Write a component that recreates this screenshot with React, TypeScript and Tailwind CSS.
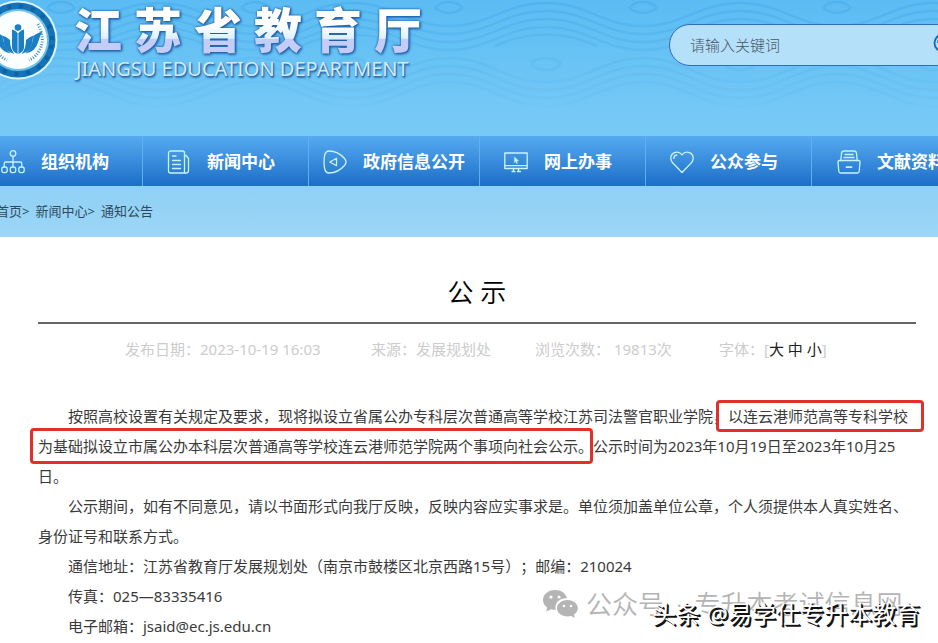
import React from "react";

type IconProps = { className?: string };

const iconProps = {
  viewBox: "0 0 24 24",
  fill: "none",
  stroke: "currentColor",
  strokeWidth: 1.3,
  strokeLinecap: "round" as const,
  strokeLinejoin: "round" as const,
  "aria-hidden": true,
};

const OrgIcon = ({ className }: IconProps) => (
  <svg {...iconProps} className={className}>
    <circle cx="12" cy="3.5" r="2.8" />
    <path d="M12 6.4v10.4M3.2 16.8v-3.3q0-1.5 1.5-1.5h14.6q1.5 0 1.5 1.5v3.3" />
    <rect x="0.8" y="17" width="5.4" height="5.6" rx="2" />
    <rect x="9.3" y="17" width="5.4" height="5.6" rx="2" />
    <rect x="17.8" y="17" width="5.4" height="5.6" rx="2" />
  </svg>
);

const NewsIcon = ({ className }: IconProps) => (
  <svg {...iconProps} className={className}>
    <path d="M4 1h11.5q2 0 2 2v20H3.5q-2 0-2-2V3.500Q1.500 1 4 1z" />
    <path d="M17.500 5.500h1.500l2.500 3v12q0 2.500-2.500 2.500h-1.500M5.500 6h3.500M5.500 10.500h8M5.500 14.500h8M5.500 18.500h8" />
  </svg>
);

const InfoIcon = ({ className }: IconProps) => (
  <svg {...iconProps} className={className}>
    <path d="M6 1Q15 1 21.500 8.500q3 3.500 0 7Q15 23 6 23 2.500 23 1.500 18 .6 12 1.500 6 2.500 1 6 1z" />
    <path d="M13.500 8.300v7.400L6.800 12z" />
  </svg>
);

const OnlineIcon = ({ className }: IconProps) => (
  <svg {...iconProps} className={className}>
    <rect x="0.8" y="3" width="22.400" height="15.500" />
    <path d="M1 15.600h22M9.500 18.500v2.500M14.500 18.500v2.500M8 21.500h3M13.500 21.500h3" />
    <path d="M10.500 7l4.200 3.800-2 .3.900 2.200-1 .4-.9-2.200-1.300 1.200z" fill="currentColor" strokeWidth="0.300" />
  </svg>
);

const HeartIcon = ({ className }: IconProps) => (
  <svg {...iconProps} className={className}>
    <path d="M12 22.500L2.600 12.800C-.5 9 .6 4 4.500 2.600 7.500 1.600 10.600 3 12 4.800 13.400 3 16.500 1.600 19.500 2.600 23.400 4 24.500 9 21.400 12.800z" />
    <path d="M3.800 8.400q0-3 3-3.400" />
  </svg>
);

const ArchiveIcon = ({ className }: IconProps) => (
  <svg {...iconProps} className={className}>
    <path d="M3.800 10.500l.7-7.300Q4.800 1 7 1h10q2.200 0 2.500 2.200l.7 7.300" />
    <path d="M8 4.500h8M7 7.500h10M2.500 10.500h19q1.700 0 1.500 1.700l-.8 9q-.2 1.800-2 1.800H3.800q-1.800 0-2-1.800l-.8-9q-.2-1.700 1.500-1.700z" />
    <path d="M9.500 17.200h5" strokeWidth="1.800" />
  </svg>
);

const NAV_ITEMS = [
  { label: "组织机构", Icon: OrgIcon, box: "w-[167px] pl-[25px]" },
  { label: "新闻中心", Icon: NewsIcon, box: "w-[166px] pl-6" },
  { label: "政府信息公开", Icon: InfoIcon, box: "w-[171px] pl-[14px]" },
  { label: "网上办事", Icon: OnlineIcon, box: "w-[166px] pl-6" },
  { label: "公众参与", Icon: HeartIcon, box: "w-[166px] pl-6" },
  { label: "文献资料", Icon: ArchiveIcon, box: "w-[166px] pl-[25px]" },
];

// Escudo circular del departamento
const Emblem = () => (
  <svg viewBox="0 0 80 80" className="size-20 shrink-0" aria-hidden="true">
    <circle cx="40" cy="40" r="39.500" fill="#d9f2fb" />
    <circle cx="40" cy="40" r="37.500" fill="#1574b8" />
    <circle cx="40" cy="40" r="31" fill="#6dc0e8" />
    <circle cx="40" cy="40" r="29" fill="#fbfeff" />
    <circle
      cx="40"
      cy="40"
      r="34"
      fill="none"
      stroke="#0b4f8c"
      strokeWidth="4"
      strokeDasharray="4 8"
      strokeDashoffset="-125"
      pathLength="213"
      opacity="0.5"
    />
    <g fill="#1b7fc4">
      <circle cx="40" cy="27.500" r="3.300" />
      <path d="M40 34q-1.500-3.500-6-4.500v18q0 4 6 6.500 6-2.500 6-6.500v-18q-4.500 1-6 4.500z" />
      <path d="M32 40q-4-4-8-4.500 1.500 3 1.500 6 1 10 11 12.500-4.500-5-4.500-14z" />
      <path d="M48 40q4-4 8-4.500-1.500 3-1.500 6-1 10-11 12.500 4.500-5 4.500-14z" />
      <path d="M24.500 36q-5-4-9-4 3 4 4 9 3 11 13 12.500-7-6-8-17.500z" />
      <path d="M55.500 36q5-4 9-4-3 4-4 9-3 11-13 12.500 7-6 8-17.500z" />
    </g>
    <path d="M40 34v20" stroke="#fff" strokeWidth="0.800" />
    <path
      d="M60 24q8 16 1 27-4 7-10 9M20 24q-8 16-1 27 4 7 10 9"
      fill="none"
      stroke="#3b93bd"
      strokeWidth="3"
      strokeDasharray="1 1.600"
    />
  </svg>
);

// Olas tenues del fondo de cabecera
const Waves = () => (
  <svg className="absolute inset-0 size-full" aria-hidden="true">
    <defs>
      <pattern id="waves" x="61" width="194" height="136" patternUnits="userSpaceOnUse">
        <g fill="none" stroke="#2f97dc" strokeWidth="2.500">
          <path d="M22-2q75-22 150 0" />
          <path d="M0 26C40 26 56 3 97 3s57 23 97 23" />
          <path d="M0 34c40 0 56-23 97-23s57 23 97 23" />
          <path d="M0 42c40 0 56-23 97-23s57 23 97 23" />
          <path d="M0 50c40 0 56-23 97-23s57 23 97 23" />
          <path d="M46 46q51-23 102 0" />
          <path d="M0 58c40 0 56 24 97 24s57-24 97-24" />
          <path d="M0 66c40 0 56 24 97 24s57-24 97-24" />
          <path d="M0 74c40 0 56 24 97 24s57-24 97-24" />
          <path d="M0 82c40 0 56 24 97 24s57-24 97-24" />
          <ellipse cx="97" cy="64" rx="14" ry="6" />
          <path d="M14 8q-7 5-14 5M180 8q7 5 14 5M14 8q-5-6-14-6M180 8q5-6 14-6" />
        </g>
      </pattern>
      <linearGradient id="fade" x2="0" y2="1">
        <stop offset="0" stopColor="#fff" />
        <stop offset="0.900" stopColor="#000" />
      </linearGradient>
      <mask id="wave-mask">
        <rect width="100%" height="100%" fill="url(#fade)" />
      </mask>
    </defs>
    <rect width="100%" height="100%" fill="url(#waves)" mask="url(#wave-mask)" opacity="0.250" />
  </svg>
);

const Header: React.FC = () => (
  <header className="relative flex h-[136px] items-start justify-between overflow-hidden bg-gradient-to-b from-[#5bbcf3] to-[#79cbf6]">
    <Waves />
    <div className="relative -ml-[22px] flex gap-4">
      <Emblem />
      <div className="pt-1">
        <h1 className="flex gap-3 text-5xl leading-[52px] font-black [filter:drop-shadow(0_0_1px_#1c5aa6)_drop-shadow(1px_1px_1px_#1c5aa6)]">
          {[..."江苏省教育厅"].map((char) => (
            <span
              key={char}
              className="bg-gradient-to-b from-white from-40% via-[#dcf0ff] via-66% to-[#c3cdf8] to-68% bg-clip-text text-transparent"
            >
              {char}
            </span>
          ))}
        </h1>
        <p className="pl-0.5 text-xl leading-[26px] whitespace-nowrap text-[#d3e9fb] [text-shadow:1px_1px_1px_#2d6ca8,1px_2px_2px_#2d6ca8]">
          JIANGSU EDUCATION DEPARTMENT
        </p>
      </div>
    </div>
    <form className="relative mt-6 -mr-5 flex h-[42px] w-[289px] shrink-0 items-center rounded-full border border-[#2f6fb5] bg-[#b5e0fa] pl-5">
      <input
        type="text"
        aria-label="请输入关键词"
        placeholder="请输入关键词"
        className="min-w-0 flex-1 bg-transparent text-[15px] font-light text-gray-600 outline-none placeholder:text-gray-600"
      />
      <button type="submit" aria-label="搜索" className="mb-1 size-6 text-[#1668ae]">
        <svg viewBox="0 0 24 24" fill="none" stroke="currentColor" strokeWidth="1.800">
          <circle cx="10" cy="12" r="8.500" />
          <path d="M5 12q0-5 5-5M16 18l5 5" />
        </svg>
      </button>
    </form>
  </header>
);

const Nav: React.FC = () => (
  <nav className="overflow-hidden bg-gradient-to-b from-[#55abf0] to-[#1b6ec7]">
    <div className="-ml-6 flex">
      {NAV_ITEMS.map(({ label, Icon, box }) => (
        <a
          key={label}
          href="#"
          className={`flex h-[50px] shrink-0 items-center gap-4 border-r border-[#61b0ee] pt-0.5 text-[17px] font-bold whitespace-nowrap text-white ${box}`}
        >
          <Icon className="size-6 text-[#c9f3fb]" />
          {label}
        </a>
      ))}
    </div>
  </nav>
);

const Breadcrumb: React.FC = () => (
  <div className="h-[51px] overflow-hidden bg-gradient-to-b from-[#8ed0f4] to-[#9dd6f7] text-[13px] leading-[50px] text-[#2f4a5c]">
    <div className="-ml-1 flex gap-1.5">
      <span>
        <a href="#">首页</a>&gt;
      </span>
      <span>
        <a href="#">新闻中心</a>&gt;
      </span>
      <a href="#">通知公告</a>
    </div>
  </div>
);

const Article: React.FC = () => (
  <main className="pr-[22px] pl-[38px]">
    <h2 className="border-b-2 border-[#666] pt-[35px] pb-2.5 text-center text-[26px] leading-10 font-[350] text-black">
      公 示
    </h2>
    <div className="flex pt-2.5 pl-[87px] text-[15px] leading-[30px] whitespace-nowrap text-[#ccc]">
      <span className="w-[246px]">发布日期：2023-10-19 16:03</span>
      <span className="w-[164px]">来源：发展规划处</span>
      <span className="w-[184px]">浏览次数： 19813次</span>
      <span>
        字体：[
        <span className="text-[#222]">
          <a href="#">大</a> <a href="#">中</a> <a href="#">小</a>
        </span>
        ]
      </span>
    </div>
    <div className="pt-[37px] text-[15px] leading-[30px] text-[#3a3a3a] [text-spacing-trim:space-all] [&>p]:indent-[30px]">
      <p>
        按照高校设置有关规定及要求，现将拟设立省属公办专科层次普通高等学校江苏司法警官职业学院，
        <span className="relative">
          以连云港师范高等专科学校
          <span className="absolute -inset-y-1.5 -right-4 -left-3 rounded-sm border-3 border-[#e0302a]" />
        </span>
        <span className="relative">
          为基础拟设立市属公办本科层次普通高等学校连云港师范学院两个事项向社会公示。
          <span className="absolute -inset-y-2 right-0 -left-2 rounded-sm border-3 border-[#e0302a]" />
        </span>
        公示时间为2023年10月19日至2023年10月25日。
      </p>
      <p>
        公示期间，如有不同意见，请以书面形式向我厅反映，反映内容应实事求是。单位须加盖单位公章，个人须提供本人真实姓名、身份证号和联系方式。
      </p>
      <p>通信地址：江苏省教育厅发展规划处（南京市鼓楼区北京西路15号）；邮编：210024</p>
      <p>传真：025—83335416</p>
      <p>电子邮箱：jsaid@ec.js.edu.cn</p>
    </div>
  </main>
);

const Watermark: React.FC = () => (
  <div className="absolute right-[18px] bottom-2.5 h-[46px] w-[378px] whitespace-nowrap">
    <div className="flex items-center text-[26px] leading-9 font-[350] text-[#b4b4b4]">
      <svg viewBox="0 0 36 30" className="mr-2 h-[30px] w-9" aria-hidden="true">
        <path
          d="M13 1C6 1 1 5.500 1 11c0 3 1.600 5.600 4.200 7.500L4 22.500l4.800-2.300c1.700.5 3.400.6 5 .5C12 14 17.500 9 25 9.300 24 4.500 19 1 13 1z"
          fill="#b4b4b4"
        />
        <path
          d="M25.500 11C19.500 11 15 14.700 15 19.300s4.500 8.200 10.500 8.200c1.300 0 2.600-.2 3.700-.5l3.600 2-1-3.300c2.600-1.600 4-3.800 4-6.400C35.800 14.700 31.500 11 25.500 11z"
          fill="#b4b4b4"
        />
        <g fill="#fff">
          <circle cx="9" cy="8" r="1.600" />
          <circle cx="17" cy="8" r="1.600" />
          <circle cx="22" cy="17" r="1.300" />
          <circle cx="29" cy="17" r="1.300" />
        </g>
      </svg>
      公众号<span className="px-3">·</span>专升本考试信息网
    </div>
    <div className="absolute right-0 bottom-0.5 text-2xl leading-8 text-white [text-shadow:1px_1px_0_#111,2px_2px_0_#111]">
      头条 @易学仕专升本教育
    </div>
  </div>
);

export default function App() {
  return (
    <div className="relative overflow-hidden bg-white pb-px font-['Noto_Sans','Noto_Sans_CJK_SC',sans-serif]">
      <Header />
      <Nav />
      <Breadcrumb />
      <Article />
      <Watermark />
    </div>
  );
}
